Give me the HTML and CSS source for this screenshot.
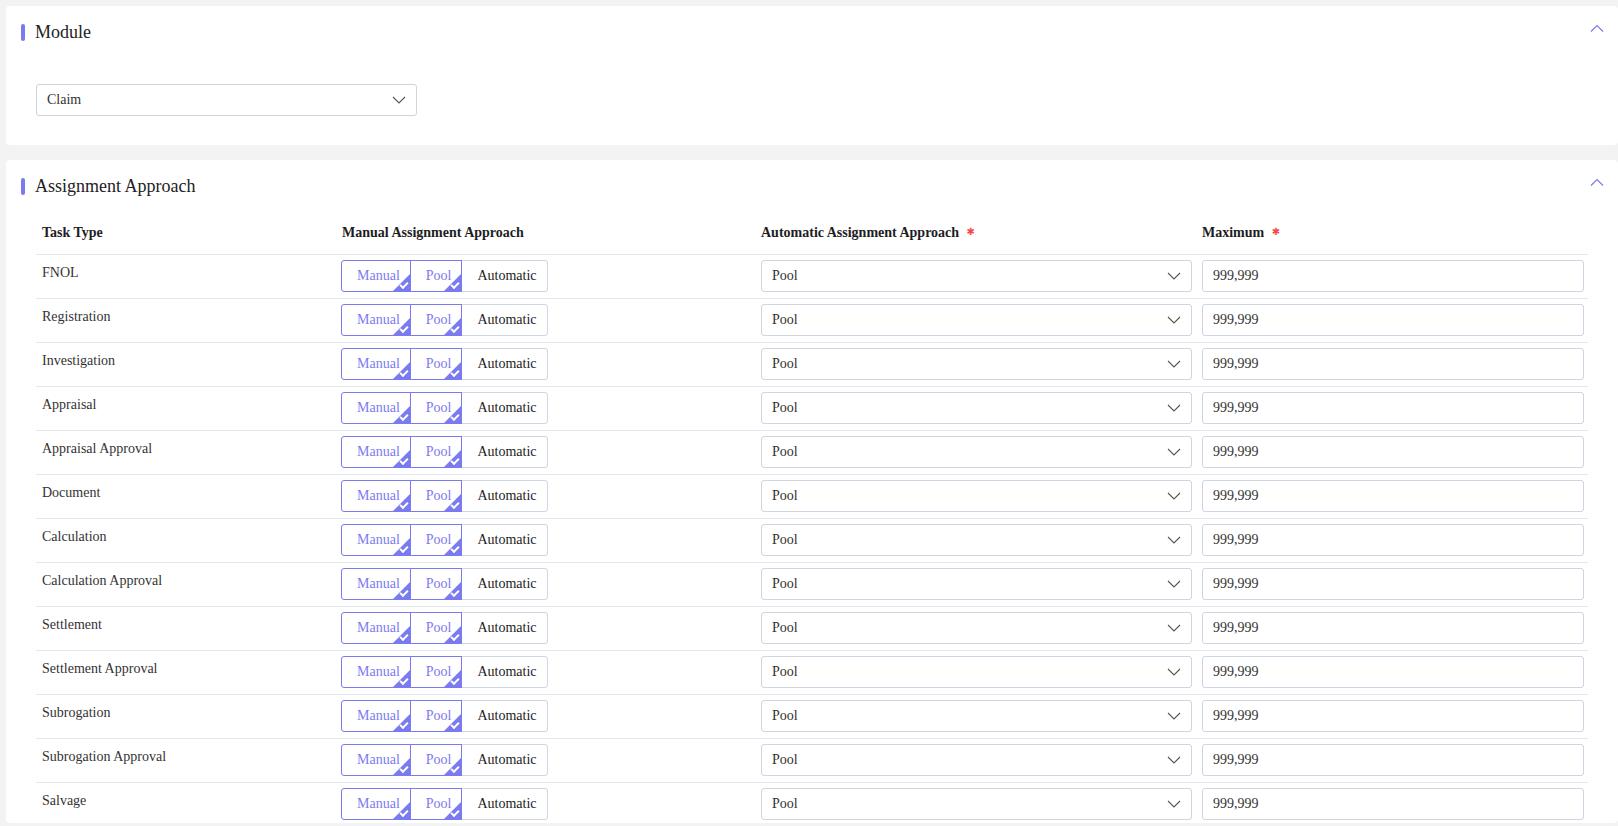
FILE: index.html
```html
<!DOCTYPE html>
<html lang="en">
<head>
    <meta charset="UTF-8">
    <meta name="viewport" content="width=device-width, initial-scale=1.0">
    <title>Assignment Approach</title>
    <link rel="stylesheet" href="styles.css">
</head>
<body>
    <div class="card card-module">
        <div class="card-head">
            <div class="card-title"><span class="bar"></span>Module</div>
            <svg class="fold" width="14" height="8" viewBox="0 0 14 8"><path d="M1 7.5 L7 1.5 L13 7.5" /></svg>
        </div>
        <div class="card-body">
            <div class="select module-select">
                <span>Claim</span>
                <svg class="arrow" width="14" height="8" viewBox="0 0 14 8"><path d="M1 1 L7 7 L13 1" /></svg>
            </div>
        </div>
    </div>

    <div class="card card-approach">
        <div class="card-head">
            <div class="card-title"><span class="bar"></span>Assignment Approach</div>
            <svg class="fold" width="14" height="8" viewBox="0 0 14 8"><path d="M1 7.5 L7 1.5 L13 7.5" /></svg>
        </div>
        <div class="card-body">
            <div class="grid head">
                <div class="cell task">Task Type</div>
                <div class="cell">Manual Assignment Approach</div>
                <div class="cell">Automatic Assignment Approach <span class="req">&#10033;</span></div>
                <div class="cell">Maximum <span class="req">&#10033;</span></div>
            </div>

            <div class="grid row">
                <div class="cell task">FNOL</div>
                <div class="cell"><div class="seg"><span class="opt on">Manual</span><span class="opt on">Pool</span><span class="opt">Automatic</span></div></div>
                <div class="cell"><div class="select"><span>Pool</span><svg class="arrow" width="14" height="8" viewBox="0 0 14 8"><path d="M1 1 L7 7 L13 1" /></svg></div></div>
                <div class="cell"><div class="input">999,999</div></div>
            </div>
            <div class="grid row">
                <div class="cell task">Registration</div>
                <div class="cell"><div class="seg"><span class="opt on">Manual</span><span class="opt on">Pool</span><span class="opt">Automatic</span></div></div>
                <div class="cell"><div class="select"><span>Pool</span><svg class="arrow" width="14" height="8" viewBox="0 0 14 8"><path d="M1 1 L7 7 L13 1" /></svg></div></div>
                <div class="cell"><div class="input">999,999</div></div>
            </div>
            <div class="grid row">
                <div class="cell task">Investigation</div>
                <div class="cell"><div class="seg"><span class="opt on">Manual</span><span class="opt on">Pool</span><span class="opt">Automatic</span></div></div>
                <div class="cell"><div class="select"><span>Pool</span><svg class="arrow" width="14" height="8" viewBox="0 0 14 8"><path d="M1 1 L7 7 L13 1" /></svg></div></div>
                <div class="cell"><div class="input">999,999</div></div>
            </div>
            <div class="grid row">
                <div class="cell task">Appraisal</div>
                <div class="cell"><div class="seg"><span class="opt on">Manual</span><span class="opt on">Pool</span><span class="opt">Automatic</span></div></div>
                <div class="cell"><div class="select"><span>Pool</span><svg class="arrow" width="14" height="8" viewBox="0 0 14 8"><path d="M1 1 L7 7 L13 1" /></svg></div></div>
                <div class="cell"><div class="input">999,999</div></div>
            </div>
            <div class="grid row">
                <div class="cell task">Appraisal Approval</div>
                <div class="cell"><div class="seg"><span class="opt on">Manual</span><span class="opt on">Pool</span><span class="opt">Automatic</span></div></div>
                <div class="cell"><div class="select"><span>Pool</span><svg class="arrow" width="14" height="8" viewBox="0 0 14 8"><path d="M1 1 L7 7 L13 1" /></svg></div></div>
                <div class="cell"><div class="input">999,999</div></div>
            </div>
            <div class="grid row">
                <div class="cell task">Document</div>
                <div class="cell"><div class="seg"><span class="opt on">Manual</span><span class="opt on">Pool</span><span class="opt">Automatic</span></div></div>
                <div class="cell"><div class="select"><span>Pool</span><svg class="arrow" width="14" height="8" viewBox="0 0 14 8"><path d="M1 1 L7 7 L13 1" /></svg></div></div>
                <div class="cell"><div class="input">999,999</div></div>
            </div>
            <div class="grid row">
                <div class="cell task">Calculation</div>
                <div class="cell"><div class="seg"><span class="opt on">Manual</span><span class="opt on">Pool</span><span class="opt">Automatic</span></div></div>
                <div class="cell"><div class="select"><span>Pool</span><svg class="arrow" width="14" height="8" viewBox="0 0 14 8"><path d="M1 1 L7 7 L13 1" /></svg></div></div>
                <div class="cell"><div class="input">999,999</div></div>
            </div>
            <div class="grid row">
                <div class="cell task">Calculation Approval</div>
                <div class="cell"><div class="seg"><span class="opt on">Manual</span><span class="opt on">Pool</span><span class="opt">Automatic</span></div></div>
                <div class="cell"><div class="select"><span>Pool</span><svg class="arrow" width="14" height="8" viewBox="0 0 14 8"><path d="M1 1 L7 7 L13 1" /></svg></div></div>
                <div class="cell"><div class="input">999,999</div></div>
            </div>
            <div class="grid row">
                <div class="cell task">Settlement</div>
                <div class="cell"><div class="seg"><span class="opt on">Manual</span><span class="opt on">Pool</span><span class="opt">Automatic</span></div></div>
                <div class="cell"><div class="select"><span>Pool</span><svg class="arrow" width="14" height="8" viewBox="0 0 14 8"><path d="M1 1 L7 7 L13 1" /></svg></div></div>
                <div class="cell"><div class="input">999,999</div></div>
            </div>
            <div class="grid row">
                <div class="cell task">Settlement Approval</div>
                <div class="cell"><div class="seg"><span class="opt on">Manual</span><span class="opt on">Pool</span><span class="opt">Automatic</span></div></div>
                <div class="cell"><div class="select"><span>Pool</span><svg class="arrow" width="14" height="8" viewBox="0 0 14 8"><path d="M1 1 L7 7 L13 1" /></svg></div></div>
                <div class="cell"><div class="input">999,999</div></div>
            </div>
            <div class="grid row">
                <div class="cell task">Subrogation</div>
                <div class="cell"><div class="seg"><span class="opt on">Manual</span><span class="opt on">Pool</span><span class="opt">Automatic</span></div></div>
                <div class="cell"><div class="select"><span>Pool</span><svg class="arrow" width="14" height="8" viewBox="0 0 14 8"><path d="M1 1 L7 7 L13 1" /></svg></div></div>
                <div class="cell"><div class="input">999,999</div></div>
            </div>
            <div class="grid row">
                <div class="cell task">Subrogation Approval</div>
                <div class="cell"><div class="seg"><span class="opt on">Manual</span><span class="opt on">Pool</span><span class="opt">Automatic</span></div></div>
                <div class="cell"><div class="select"><span>Pool</span><svg class="arrow" width="14" height="8" viewBox="0 0 14 8"><path d="M1 1 L7 7 L13 1" /></svg></div></div>
                <div class="cell"><div class="input">999,999</div></div>
            </div>
            <div class="grid row">
                <div class="cell task">Salvage</div>
                <div class="cell"><div class="seg"><span class="opt on">Manual</span><span class="opt on">Pool</span><span class="opt">Automatic</span></div></div>
                <div class="cell"><div class="select"><span>Pool</span><svg class="arrow" width="14" height="8" viewBox="0 0 14 8"><path d="M1 1 L7 7 L13 1" /></svg></div></div>
                <div class="cell"><div class="input">999,999</div></div>
            </div>
        </div>
    </div>
</body>
</html>
```

FILE: styles.css
```css
html, body {
    overflow: hidden;
}
body {
    margin: 0;
    background-color: #f3f3f3;
    font-family: "Liberation Serif", "Times New Roman", serif;
    font-size: 14px;
    color: #333;
}
.card {
    background-color: #fff;
    border-radius: 4px;
    margin-left: 6px;
    padding: 14px 15px 29px 15px;
}
.card-module {
    margin-top: 6px;
}
.card-approach {
    margin-top: 15px;
    padding-bottom: 0;
}
.card-head {
    display: flex;
    justify-content: space-between;
    height: 24px;
}
.card-title {
    display: flex;
    align-items: center;
    font-size: 18px;
    line-height: 24px;
    color: #222;
}
.bar {
    width: 4px;
    height: 17px;
    border-radius: 2px;
    background-color: #7b7bf0;
    margin-right: 10px;
}
.fold {
    margin-top: 4px;
    margin-right: -1px;
}
.fold path {
    fill: none;
    stroke: #7b7bf0;
    stroke-width: 1.2;
}
.card-body {
    padding: 0 15px;
}
.card-module .card-body {
    padding-top: 40px;
}
.card-approach .card-body {
    padding-top: 14px;
}
.select, .input {
    box-sizing: border-box;
    height: 32px;
    border: 1px solid #cdd5e1;
    border-radius: 3px;
    display: flex;
    align-items: center;
    padding: 0 10px;
    color: #333;
    background-color: #fff;
}
.select {
    justify-content: space-between;
    margin-right: 10px;
}
.module-select {
    width: 381px;
    margin-right: 0;
}
.arrow path {
    fill: none;
    stroke: #555;
    stroke-width: 1.1;
}
.input {
    margin-right: 4px;
}
.grid {
    display: grid;
    grid-template-columns: 305px 420px 441px 1fr;
    border-bottom: 1px solid #e3e6ed;
}
.head {
    box-sizing: border-box;
    height: 43px;
    align-items: center;
    font-weight: bold;
    color: #1d1d1f;
}
.head .cell:nth-child(2) {
    padding-left: 1px;
}
.req {
    font-family: "DejaVu Sans", sans-serif;
    font-size: 10px;
    color: #f24b4b;
    margin-left: 4px;
    vertical-align: 2px;
}
.row {
    padding: 5px 0 6px;
}
.row:last-child {
    border-bottom: none;
    padding-bottom: 3px;
}
.task {
    padding-left: 6px;
}
.row .task {
    padding-top: 3px;
    line-height: 20px;
}
.seg {
    display: inline-flex;
    height: 32px;
}
.opt {
    position: relative;
    box-sizing: border-box;
    height: 32px;
    line-height: 30px;
    padding: 0 10px 0 15px;
    border: 1px solid #d0d7e2;
    color: #222;
    background-color: #fff;
    overflow: hidden;
}
.opt + .opt {
    margin-left: -1px;
}
.opt:first-child {
    border-radius: 3px 0 0 3px;
}
.opt:last-child {
    border-radius: 0 3px 3px 0;
}
.opt.on {
    z-index: 1;
    border-color: #7b7bf0;
    color: #7b7bf0;
}
.opt.on::after {
    content: "";
    position: absolute;
    right: 0;
    bottom: 0;
    width: 0;
    height: 0;
    border-bottom: 17px solid #7b7bf0;
    border-left: 17px solid transparent;
}
.opt.on::before {
    content: "";
    position: absolute;
    z-index: 1;
    right: 2px;
    bottom: 4px;
    width: 6px;
    height: 3px;
    border-left: 2px solid #fff;
    border-bottom: 2px solid #fff;
    transform: rotate(-45deg);
}
```
